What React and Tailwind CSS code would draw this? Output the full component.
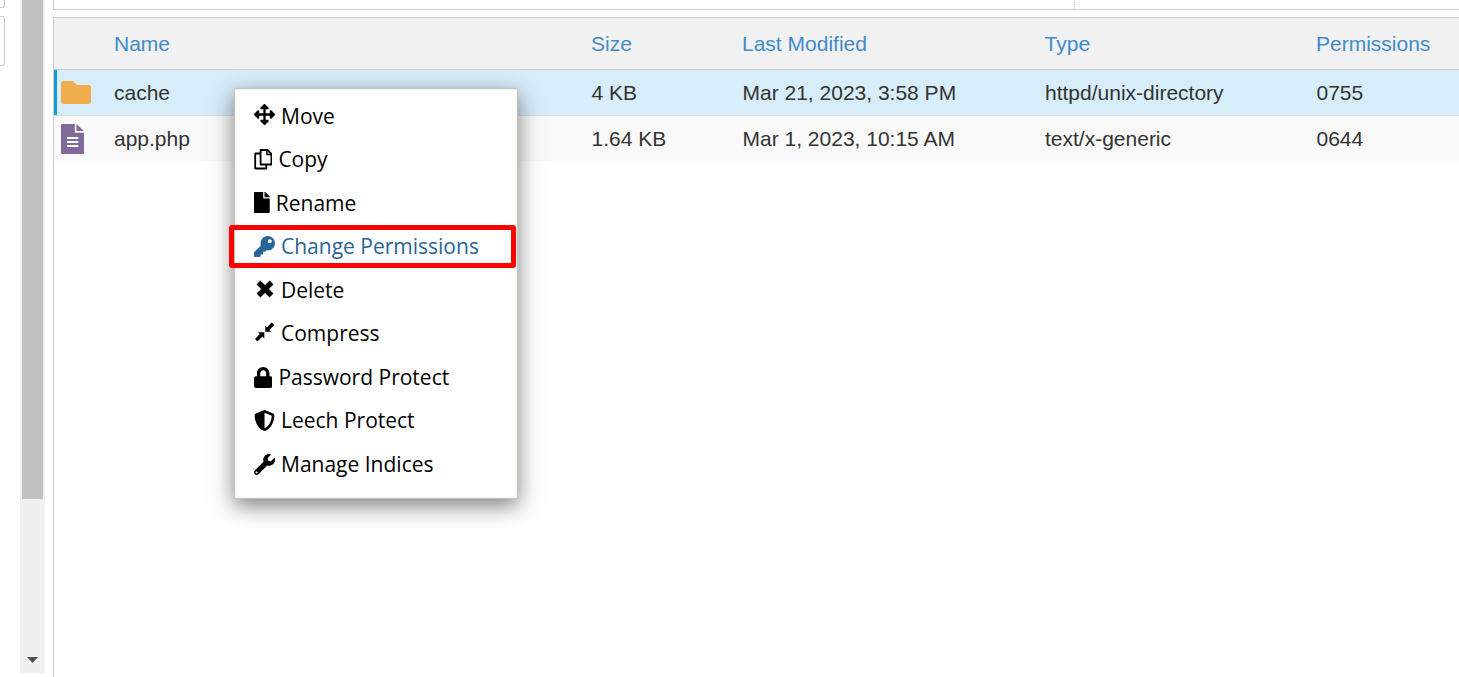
import { FaArrowsAlt, FaFile, FaKey, FaLock, FaShieldAlt, FaWrench } from "react-icons/fa";

function CopyIcon({ className }) {
  return (
    <svg viewBox="0 0 18.4 21" className={className} fill="none" stroke="currentColor" strokeWidth="1.8" strokeLinejoin="round">
      <path d="M6.600 1H13.400L17.400 5V15.500H6.600Z" />
      <path d="M12.900 1V5.400H17.400" strokeWidth="1.500" />
      <path d="M6.200 4.500H1.200V19.500H12.300V15.900" />
    </svg>
  );
}

function CloseIcon({ className }) {
  return (
    <svg viewBox="0 0 21 21" className={className} fill="none" stroke="currentColor" strokeWidth="5.4">
      <path d="M4.500 3.500 17.500 16.500M17.500 3.500 4.500 16.500" />
    </svg>
  );
}

function CompressIcon({ className }) {
  return (
    <svg viewBox="0 0 21 21" className={className} fill="currentColor">
      <path d="M11.300 3.800 12.900 5.400 17.700 0.600 20.200 3.100 15.400 7.900 17.300 9.800H11.300Z" />
      <path d="M4 10.200H10.300V16.500L8.300 14.600 3.500 19.400 1 16.900 5.800 12.100Z" />
    </svg>
  );
}

function FolderIcon() {
  return (
    <svg viewBox="0 0 30 23" className="block h-[23px] w-[30px]" fill="#f0ad4e">
      <path d="M2.5 0H12L16 4H27.500Q30 4 30 6.500V20.500Q30 23 27.500 23H2.500Q0 23 0 20.500V2.500Q0 0 2.500 0Z" />
    </svg>
  );
}

function DocumentIcon() {
  return (
    <svg viewBox="0 0 23 30" className="block h-[30px] w-[23px]">
      <path fill="#80699b" d="M1.200 0H13.800V8.800H23V28.800Q23 30 21.800 30H1.200Q0 30 0 28.800V1.200Q0 0 1.200 0Z" />
      <path fill="#80699b" d="M15.500 0 22.800 6.900H15.500Z" />
      <path stroke="#fff" strokeWidth="2" d="M6 14H17.300M6 18H17.300M6 22H17.300" />
    </svg>
  );
}

const columns = "grid grid-cols-[60px_477px_151px_302.6px_271.4px_1fr] items-center";

const files = [
  { icon: FolderIcon, name: "cache", size: "4 KB", modified: "Mar 21, 2023, 3:58 PM", type: "httpd/unix-directory", mode: "0755", selected: true },
  { icon: DocumentIcon, name: "app.php", size: "1.64 KB", modified: "Mar 1, 2023, 10:15 AM", type: "text/x-generic", mode: "0644" },
];

const actions = [
  { icon: FaArrowsAlt, label: "Move", width: "w-[21px]", offset: "-mt-[3px]" },
  { icon: CopyIcon, label: "Copy", width: "w-[18.400px]", offset: "mt-[1px]" },
  { icon: FaFile, label: "Rename", width: "w-[15.750px]", offset: "-mt-[1px]" },
  { icon: FaKey, label: "Change Permissions", width: "w-[21px]", offset: "mt-0", active: true },
  { icon: CloseIcon, label: "Delete", width: "w-[21px]", offset: "-mt-[1px]" },
  { icon: CompressIcon, label: "Compress", width: "w-[21px]", offset: "-mt-[1px]" },
  { icon: FaLock, label: "Password Protect", width: "w-[18.400px]", offset: "mt-[1px]" },
  { icon: FaShieldAlt, label: "Leech Protect", width: "w-[21px]", offset: "mt-[1px]" },
  { icon: FaWrench, label: "Manage Indices", width: "w-[21px]", offset: "mt-[1px]" },
];

function Sidebar() {
  return (
    <aside className="flex w-[53px] shrink-0">
      <div className="flex w-5 flex-col gap-[8px]">
        <div className="h-2 w-[5px] rounded-br-[3px] border-r border-b border-[#ccc]" />
        <div className="h-[50px] w-[5px] rounded-r-[3px] border border-l-0 border-[#ccc]" />
      </div>
      <div className="flex h-[673px] w-[25px] flex-col items-center justify-between bg-[#f0f0f0]">
        <div className="h-[499px] w-[21px] bg-[#c1c1c1]" />
        <svg viewBox="0 0 11 6" className="mb-[10px] h-[6px] w-[11px]" fill="#505050">
          <path d="M0 0H11L5.500 6Z" />
        </svg>
      </div>
    </aside>
  );
}

function FileTable() {
  return (
    <section className="h-[660px] border-t border-l border-[#ccc] text-[21px] leading-[30px]">
      <div className={`${columns} h-[52px] border-b border-[#ccc] bg-[#f1f1f1] text-[#428bca]`}>
        <span />
        <span>Name</span>
        <span>Size</span>
        <span>Last Modified</span>
        <span>Type</span>
        <span>Permissions</span>
      </div>
      {files.map(({ icon: Icon, name, size, modified, type, mode, selected }) => (
        <div
          key={name}
          className={`${columns} text-[#333] ${selected ? "h-[46px] border-b border-[#d5dde2] bg-[#d7edf9] shadow-[inset_3px_0_0_#179bd7]" : "h-[45px] bg-[#f9f9f9]"}`}
        >
          <span className="pl-[7px]"><Icon /></span>
          <span>{name}</span>
          <span className="pl-[0.5px]">{size}</span>
          <span className="pl-[0.5px]">{modified}</span>
          <span className="pl-[0.4px]">{type}</span>
          <span className="pl-[0.5px]">{mode}</span>
        </div>
      ))}
    </section>
  );
}

function ContextMenu() {
  return (
    <div className="absolute top-[88px] left-[234px] h-[411px] w-[284px] border border-[#c5c5b9] bg-white pt-[5px] shadow-[0_7px_21px_rgba(0,0,0,0.5),inset_0_0_0_1px_#f5f5eb]">
      {actions.map(({ icon: Icon, label, width, offset, active }) => (
        <div
          key={label}
          className={`relative flex h-[43.500px] items-center gap-[6px] pl-[19px] font-['Open_Sans',sans-serif] text-[21px] leading-[30px] ${active ? "text-[#2a6496]" : "text-black"}`}
        >
          <Icon className={`${width} ${offset} h-[21px] shrink-0`} />
          <span className="whitespace-nowrap">{label}</span>
          {active && <div className="absolute top-0 -left-[6px] h-[43px] w-[287px] rounded-[3px] border-5 border-[#f00]" />}
        </div>
      ))}
    </div>
  );
}

export default function App() {
  return (
    <div className="relative flex h-[677px] w-[1459px] overflow-hidden bg-white font-['Liberation_Sans',Arial,sans-serif]">
      <Sidebar />
      <main className="flex min-w-0 flex-1 flex-col gap-[7px]">
        <div className="flex h-[10px] border-b border-l border-[#ccc]">
          <div className="w-[1021px] border-r border-dotted border-[#ccc]" />
        </div>
        <FileTable />
      </main>
      <ContextMenu />
    </div>
  );
}
